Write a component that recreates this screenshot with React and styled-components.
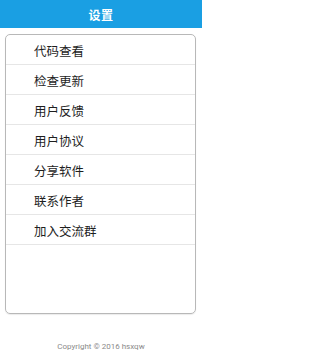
import styled, { createGlobalStyle } from "styled-components";

const GlobalStyle = createGlobalStyle`
  html, body {
    margin: 0;
    padding: 0;
    background: #fff;
  }
  body {
    font-family: "Noto Sans CJK SC", "Roboto", sans-serif;
  }
`;

const items = [
  "代码查看",
  "检查更新",
  "用户反馈",
  "用户协议",
  "分享软件",
  "联系作者",
  "加入交流群",
];

function App() {
  return (
    <Page>
      <GlobalStyle />
      <Header>设置</Header>
      <Card>
        {items.map((item) => (
          <Row key={item}>{item}</Row>
        ))}
      </Card>
      <Footer>Copyright © 2016 hsxqw</Footer>
    </Page>
  );
}

export default App;

const Page = styled.div`
  display: flex;
  flex-direction: column;
  width: 202px;
  height: 359px;
  overflow: hidden;
`;

const Header = styled.div`
  display: flex;
  justify-content: center;
  align-items: center;
  height: 28px;
  background-color: #1a9fe3;
  color: #fff;
  font-size: 12px;
  font-weight: 700;
  letter-spacing: 0.5px;
`;

const Card = styled.div`
  display: flex;
  flex-direction: column;
  height: 280px;
  margin: 6px 6px 0 5px;
  border: 1px solid #b8b8b8;
  border-radius: 5px;
  box-sizing: border-box;
  box-shadow: 0 1px 1px rgba(0, 0, 0, 0.08);
`;

const Row = styled.div`
  display: flex;
  align-items: center;
  height: 29px;
  padding-left: 28px;
  border-bottom: 1px solid #e6e6e6;
  color: #1e1e1e;
  font-size: 12.5px;
  padding-top: 1px;
  box-sizing: border-box;
  height: 30px;
`;

const Footer = styled.div`
  margin-top: auto;
  padding-bottom: 8px;
  text-align: center;
  color: #8a8a8a;
  font-family: "Roboto", sans-serif;
  font-size: 8px;
`;
